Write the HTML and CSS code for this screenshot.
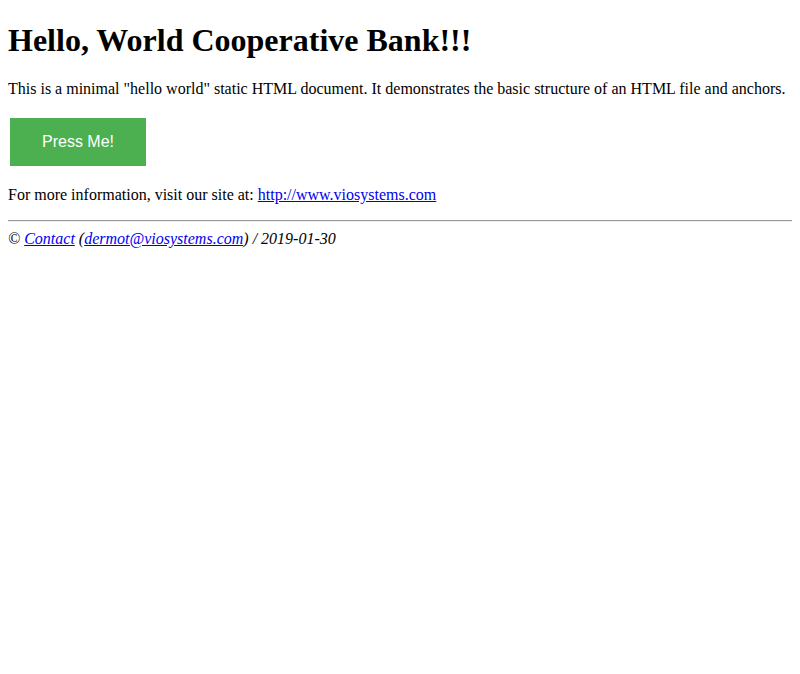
FILE: index.html
```html
<!DOCTYPE html>
<html>
<head>
<meta charset="utf-8">
<title>Hello, World Cooperative Bank!!!</title>
<link rel="stylesheet" href="styles.css">
</head>
<body>
<h1>Hello, World Cooperative Bank!!!</h1>
<p>This is a minimal "hello world" static HTML document. It demonstrates the basic structure of an HTML file and anchors.</p>
<div><button class="button">Press Me!</button></div>
<p>For more information, visit our site at: <a href="#">http://www.viosystems.com</a></p>
<hr>
<footer class="footer">© <a href="#">Contact</a> (<a href="#">dermot@viosystems.com</a>) / 2019-01-30</footer>
</body>
</html>
```
FILE: styles.css
```css
body {
  margin: 8px;
  font-family: "Liberation Serif", "Times New Roman", serif;
  font-size: 16px;
  color: #000;
  background: #fff;
}
h1 {
  font-size: 2em;
  margin: 14px 0 21px;
}
p {
  margin: 16px 0;
}
a {
  color: #0000ee;
}
.button {
  background-color: #4caf50;
  border: none;
  color: #fff;
  padding: 15px 32px;
  text-align: center;
  display: inline-block;
  font-family: "Liberation Sans", Arial, sans-serif;
  font-size: 16px;
  margin: 4px 2px;
  cursor: pointer;
}
hr {
  margin: 8px 0;
  height: 0;
  border: none;
  border-top: 1px solid #9a9a9a;
  border-bottom: 1px solid #eeeeee;
}
.footer {
  font-style: italic;
}
```
